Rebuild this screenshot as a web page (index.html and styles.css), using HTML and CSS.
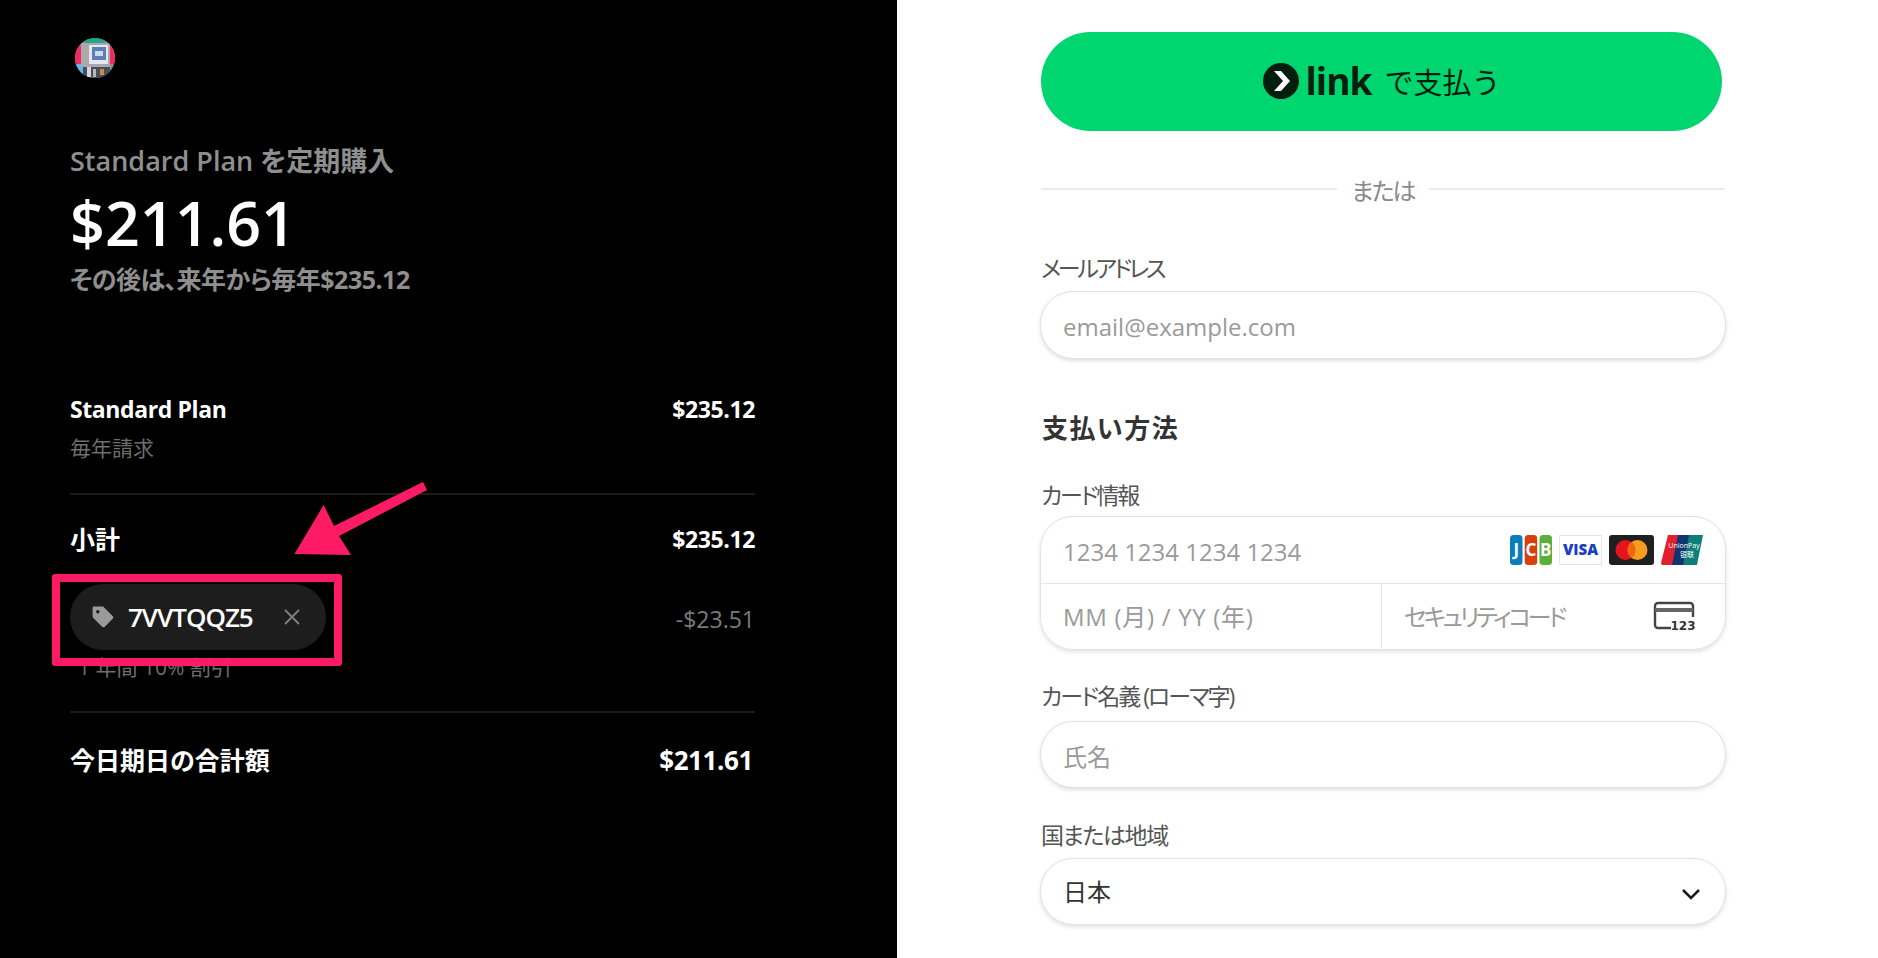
FILE: index.html
```html
<!DOCTYPE html>
<html lang="ja">

<head>
    <meta charset="UTF-8">
    <title>Standard Plan を定期購入</title>
    <link rel="stylesheet" href="styles.css">
</head>

<body>
    <div class="checkout">

        <!-- Order summary -->
        <section class="summary">
            <svg class="logo" viewBox="0 0 40 40">
                <defs>
                    <clipPath id="logoClip"><circle cx="20" cy="20" r="20" /></clipPath>
                </defs>
                <g clip-path="url(#logoClip)">
                    <rect width="40" height="40" fill="#8d8d92" />
                    <rect x="10" width="20" height="5" fill="#1fa88c" />
                    <rect y="8" width="6" height="18" fill="#ee2a63" />
                    <rect x="35" y="8" width="5" height="18" fill="#ee2a63" />
                    <rect y="26" width="8" height="14" fill="#5fb8ec" />
                    <rect x="6" y="5" width="29" height="24" fill="#a9a9ae" />
                    <rect x="14" y="7" width="19" height="19" fill="#e6e8ee" />
                    <rect x="17" y="9" width="14" height="13" fill="#5d7fb8" />
                    <rect x="20" y="13" width="8" height="5" fill="#cfd9ea" />
                    <rect x="8" y="29" width="27" height="11" fill="#4a4e5a" />
                    <rect x="12" y="29" width="4" height="10" fill="#d8d8da" />
                    <rect x="18" y="31" width="3" height="8" fill="#b8b8bc" />
                    <rect x="25" y="31" width="4" height="6" fill="#c98a4a" />
                </g>
            </svg>

            <div class="plan-title">Standard Plan を定期購入</div>
            <div class="plan-price">$211.61</div>
            <div class="plan-note">その後は、来年から毎年$235.12</div>

            <div class="line first">
                <span class="line-name">Standard Plan</span>
                <span class="line-amount">$235.12</span>
            </div>
            <div class="line-sub">毎年請求</div>

            <div class="line subtotal">
                <span class="line-name cjk">小計</span>
                <span class="line-amount">$235.12</span>
            </div>
            <div class="line promo">
                <span class="promo-pill">
                    <svg class="promo-tag" viewBox="0 0 20 20">
                        <path d="M2 3.2C2 2.5 2.5 2 3.2 2h6.3c.4 0 .7.1 1 .4l7.100 7.100c.5.5.5 1.200 0 1.700l-6.400 6.400c-.5.5-1.200.5-1.700 0L2.400 10.500c-.3-.3-.4-.6-.4-1z" fill="#9a9a9a" />
                        <circle cx="6" cy="6" r="1.300" fill="#1d1d1d" />
                    </svg>
                    <span class="promo-code">7VVTQQZ5</span>
                    <svg class="promo-close" viewBox="0 0 18 18">
                        <path d="M2 2l14 14M16 2L2 16" stroke="#808080" stroke-width="1.800" fill="none" />
                    </svg>
                </span>
                <span class="promo-amount">-$23.51</span>
            </div>
            <div class="promo-note">1 年間 10% 割引</div>

            <div class="line total">
                <span class="line-name cjk">今日期日の合計額</span>
                <span class="line-amount">$211.61</span>
            </div>

            <!-- Annotation drawn over the screenshot -->
            <div class="mark-box"></div>
            <svg class="mark-arrow" viewBox="0 0 150 90">
                <path d="M138 2 L142 10 L54 56 L66 75 L9.500 74 L38.600 25 L49 46 Z" fill="#ff1a66" />
            </svg>
        </section>

        <!-- Payment form -->
        <section class="payment">
            <button class="link-btn">
                <svg class="link-icon" viewBox="0 0 36 36">
                    <circle cx="18" cy="18" r="18" fill="#011e0f" />
                    <path d="M11 8h7l9 10-9 10h-7l9-10z" fill="#fff" />
                </svg>
                <span class="link-word">link</span>
                <span class="link-text">で支払う</span>
            </button>

            <div class="divider"><span>または</span></div>

            <label class="label email-label">メールアドレス</label>
            <input class="field" type="text" placeholder="email@example.com">

            <h2 class="section-title">支払い方法</h2>

            <label class="label card-label">カード情報</label>
            <div class="card-box">
                <div class="card-row">
                    <input class="card-input" type="text" placeholder="1234 1234 1234 1234">
                    <div class="brands">
                        <svg class="brand brand-w42" viewBox="0 0 42 30">
                            <rect width="12.500" height="30" rx="3.500" fill="#0a7dbb" />
                            <rect x="14.700" width="12.500" height="30" rx="3.500" fill="#d9400f" />
                            <rect x="29.500" width="12.500" height="30" rx="3.500" fill="#5aae3a" />
                            <text x="6.200" y="21" class="brand-jcb">J</text>
                            <text x="21" y="21" class="brand-jcb">C</text>
                            <text x="35.700" y="21" class="brand-jcb">B</text>
                        </svg>
                        <svg class="brand brand-w43" viewBox="0 0 43 30">
                            <rect x=".5" y=".5" width="42" height="29" fill="#fff" stroke="#e6e6e6" />
                            <text x="21.500" y="20" class="brand-visa">VISA</text>
                        </svg>
                        <svg class="brand brand-w45" viewBox="0 0 45 30">
                            <rect width="45" height="30" rx="3" fill="#1f1f1f" />
                            <circle cx="16.500" cy="15" r="10" fill="#e3141c" />
                            <circle cx="28.500" cy="15" r="10" fill="#f69c1f" />
                            <path d="M22.500 7a10 10 0 0 1 0 16a10 10 0 0 1 0-16z" fill="#f2640f" />
                        </svg>
                        <svg class="brand brand-w42" viewBox="0 0 42 30">
                            <path d="M7 0h12L13 30H1L0 28z" fill="#e0202c" />
                            <path d="M17 0h13l-6 30H11z" fill="#10356e" />
                            <path d="M28 0h14l-6 30H22z" fill="#0d7f78" />
                            <text x="23" y="13" class="brand-up">UnionPay</text>
                            <text x="26" y="22" class="brand-up">银联</text>
                        </svg>
                    </div>
                </div>
                <div class="card-row split">
                    <div class="card-cell">
                        <input class="card-input exp-input" type="text" placeholder="MM (月) / YY (年)">
                    </div>
                    <div class="card-cell">
                        <input class="card-input cvc-input" type="text" placeholder="セキュリティコード">
                        <svg class="cvc" viewBox="0 0 42 32">
                            <path d="M18 27H5a3 3 0 0 1-3-3V5a3 3 0 0 1 3-3h32a3 3 0 0 1 3 3v11" fill="none" stroke="#444" stroke-width="2.400" />
                            <rect x="2" y="7" width="38" height="4" fill="#666" />
                            <text x="30" y="29" class="cvc-text">123</text>
                        </svg>
                    </div>
                </div>
            </div>

            <label class="label name-label">カード名義 (ローマ字)</label>
            <input class="field" type="text" placeholder="氏名">

            <label class="label country-label">国または地域</label>
            <div class="select-wrap">
                <select class="field select">
                    <option>日本</option>
                </select>
                <svg class="chevron" viewBox="0 0 20 12">
                    <path d="M2 2l8 8 8-8" fill="none" stroke="#1a1a1a" stroke-width="2.500" />
                </svg>
            </div>
        </section>
    </div>
</body>

</html>
```

FILE: styles.css
```css
* {
    box-sizing: border-box;
}

body {
    margin: 0;
    background-color: white;
    font-family: "Open Sans", "Noto Sans CJK JP", sans-serif;
    font-feature-settings: "palt";
}

.checkout {
    display: grid;
    grid-template-columns: 897px 1fr;
    height: 100vh;
    overflow: hidden;
}

/* left side */
.summary {
    position: relative;
    background-color: black;
    color: white;
    padding: 38px 142px 0 70px;
}

.logo {
    display: block;
    width: 40px;
    height: 40px;
    margin-left: 5px;
}

.plan-title {
    margin-top: 67px;
    font-size: 27px;
    line-height: 32px;
    font-weight: 600;
    color: #8f8f8f;
}

.plan-price {
    margin-top: 14px;
    font-size: 61px;
    line-height: 64px;
    font-weight: 600;
}

.plan-note {
    margin-top: 9px;
    font-size: 25px;
    line-height: 30px;
    font-weight: 700;
    color: #8f8f8f;
    letter-spacing: -0.5px;
}

.line {
    display: flex;
    justify-content: space-between;
    align-items: center;
    font-size: 23px;
    line-height: 30px;
    font-weight: 700;
    letter-spacing: -0.4px;
}

.line-name.cjk {
    font-size: 25px;
    letter-spacing: 0;
}

.line.first {
    margin-top: 100px;
}

.line-sub {
    margin-top: 11px;
    padding-bottom: 32px;
    border-bottom: 2px solid #1c1c1c;
    font-size: 21px;
    line-height: 26px;
    color: #6e6e6e;
}

.line.subtotal {
    margin-top: 29px;
}

.line.promo {
    margin-top: 30px;
}

.promo-pill {
    display: flex;
    align-items: center;
    width: 256px;
    height: 66px;
    padding: 0 25px 0 20px;
    border-radius: 33px;
    background-color: #1d1d1d;
}

.promo-tag {
    width: 26px;
    height: 26px;
    flex: none;
}

.promo-code {
    margin-left: 12px;
    font-size: 26px;
    font-weight: 600;
    letter-spacing: -1px;
}

.promo-close {
    width: 18px;
    height: 18px;
    margin-left: auto;
    flex: none;
}

.promo-amount {
    margin-top: 4px;
    font-weight: 400;
    letter-spacing: 0;
    color: #7a7a7a;
}

.promo-note {
    margin-top: 5px;
    padding: 0 0 32px 8px;
    border-bottom: 2px solid #1c1c1c;
    font-size: 21px;
    line-height: 24px;
    color: #6e6e6e;
}

.line.total {
    margin-top: 32px;
    padding-right: 2px;
}

.line.total .line-amount {
    font-size: 26px;
}

.mark-box {
    position: absolute;
    left: 52px;
    top: 574px;
    width: 290px;
    height: 92px;
    border: 8px solid #ff1a66;
    border-radius: 3px;
}

.mark-arrow {
    position: absolute;
    left: 285px;
    top: 480px;
    width: 150px;
    height: 90px;
}

/* right side */
.payment {
    padding: 32px 0 0 144px;
    width: 828px;
    color: #333;
}

.link-btn {
    display: flex;
    align-items: center;
    justify-content: center;
    width: 681px;
    height: 99px;
    padding: 0 0 2px;
    border: none;
    border-radius: 50px;
    background-color: #00d66f;
    color: #011e0f;
    font-family: inherit;
}

.link-icon {
    width: 36px;
    height: 36px;
}

.link-word {
    margin-left: 7px;
    font-size: 37px;
    line-height: 50px;
    font-weight: 700;
    letter-spacing: -1px;
}

.link-text {
    margin-left: 13px;
    font-size: 29px;
}

.divider {
    display: flex;
    align-items: center;
    width: 684px;
    height: 40px;
    margin-top: 38px;
    color: #8a8a8a;
    font-size: 24px;
}

.divider::before,
.divider::after {
    content: "";
    flex: 1;
    height: 2px;
    background-color: #ebebeb;
}

.divider span {
    padding: 0 14px;
    letter-spacing: -2px;
}

.label {
    display: block;
    font-size: 23px;
    line-height: 30px;
    color: #555;
}

.email-label {
    margin-top: 44px;
    letter-spacing: -3.200px;
}

.field {
    display: block;
    width: 686px;
    height: 67px;
    margin-left: -1px;
    padding: 0 22px;
    border: 1px solid #e2e2e2;
    border-radius: 33px;
    box-shadow: 0 2px 4px rgba(0, 0, 0, 0.12);
    outline: none;
    background-color: white;
    color: #333;
    font-family: inherit;
    font-size: 24px;
    font-feature-settings: "palt";
}

input.field {
    padding-top: 3px;
}

input::placeholder {
    color: #9a9a9a;
    opacity: 1;
}

.email-label + .field {
    margin-top: 8px;
    height: 68px;
}

.section-title {
    margin: 51px 0 0 1px;
    font-size: 26px;
    line-height: 36px;
    font-weight: 600;
    letter-spacing: 1.500px;
}

.card-label {
    margin-top: 34px;
    letter-spacing: -2.200px;
}

.card-box {
    width: 686px;
    height: 134px;
    margin: 6px 0 0 -1px;
    border: 1px solid #e2e2e2;
    border-radius: 33px;
    box-shadow: 0 2px 4px rgba(0, 0, 0, 0.12);
}

.card-row {
    display: flex;
    align-items: center;
    height: 67px;
    padding: 0 22px;
    border-bottom: 1px solid #e6e6e6;
}

.card-row.split {
    height: 65px;
    padding: 0;
    border-bottom: none;
}

.card-cell {
    display: flex;
    align-items: center;
    width: 50%;
    height: 100%;
    padding: 0 22px;
}

.card-cell:first-child {
    width: calc(50% - 2px);
}

.card-cell + .card-cell {
    flex: 1;
    border-left: 1px solid #e6e6e6;
    padding-right: 30px;
}

.card-input {
    flex: 1;
    min-width: 0;
    padding: 3px 0 0;
    border: none;
    outline: none;
    font-family: inherit;
    font-size: 24px;
    font-feature-settings: "palt";
}

.exp-input {
    padding-top: 0;
    letter-spacing: 0.7px;
}

.cvc-input {
    padding-top: 0;
    letter-spacing: -3.300px;
}

.brands {
    display: flex;
    align-items: center;
    gap: 7px;
}

.brand {
    height: 30px;
}

.brand-w42 {
    width: 42px;
}

.brand-w43 {
    width: 43px;
}

.brand-w45 {
    width: 45px;
}

.brand-jcb {
    fill: white;
    font-size: 17px;
    font-weight: 700;
    text-anchor: middle;
}

.brand-visa {
    fill: #1a3fc0;
    font-size: 15px;
    font-weight: 800;
    text-anchor: middle;
}

.brand-up {
    fill: white;
    font-size: 7px;
    text-anchor: middle;
}

.cvc {
    width: 42px;
    height: 32px;
    flex: none;
}

.cvc-text {
    fill: #333;
    font-size: 12px;
    font-weight: 700;
    text-anchor: middle;
    font-family: "DejaVu Sans", sans-serif;
}

.name-label {
    margin-top: 31px;
    letter-spacing: -2px;
}

.name-label + .field {
    margin-top: 10px;
}

.country-label {
    margin-top: 32px;
    letter-spacing: -1.400px;
}

.select-wrap {
    position: relative;
    margin-top: 8px;
}

.select {
    appearance: none;
    color: #333;
}

.chevron {
    position: absolute;
    left: 640px;
    top: 30px;
    width: 20px;
    height: 12px;
}
```
